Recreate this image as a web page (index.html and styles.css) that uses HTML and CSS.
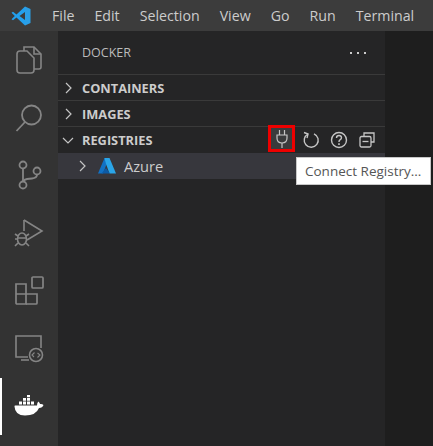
FILE: index.html
```html
<!DOCTYPE html>
<html lang="en">
<head>
    <meta charset="UTF-8">
    <meta name="viewport" content="width=device-width, initial-scale=1.0">
    <title>Docker registries</title>
    <link rel="stylesheet" href="styles.css">
</head>
<body>
    <header class="titlebar">
        <svg class="logo" width="20" height="20" viewBox="0 0 20 20">
            <path d="M14 0.5 L19.5 3 V17 L14 19.5 L14 14 V6 Z" fill="#2b9fe6"/>
            <path d="M14 0.5 L5.5 8.5 L2 5.8 L0.5 6.8 L3.8 10 L0.5 13.2 L2 14.2 L5.5 11.5 L14 19.5 V14 L8.5 10 L14 6 Z" fill="#23a0ee"/>
        </svg>
        <nav class="menu">
            <span>File</span>
            <span>Edit</span>
            <span>Selection</span>
            <span>View</span>
            <span>Go</span>
            <span>Run</span>
            <span>Terminal</span>
        </nav>
    </header>

    <div class="workbench">
        <aside class="activity">
            <div class="act">
                <svg width="28" height="30" viewBox="0 0 28 30" fill="none" stroke="currentColor" stroke-width="1.6">
                    <path d="M9 6 V2 H19 L26 9 V22 Q26 24 24 24 H19"/>
                    <path d="M19 2 V9 H26"/>
                    <path d="M9 6 H5 Q2 6 2 9 V25 Q2 28 5 28 H16 Q19 28 19 25 V13 L12 6 Z"/>
                </svg>
            </div>
            <div class="act">
                <svg width="28" height="30" viewBox="0 0 28 30" fill="none" stroke="currentColor" stroke-width="1.8">
                    <circle cx="16.5" cy="12" r="9.5"/>
                    <path d="M10 19 L1.5 28"/>
                </svg>
            </div>
            <div class="act">
                <svg width="28" height="30" viewBox="0 0 28 30" fill="none" stroke="currentColor" stroke-width="1.8">
                    <circle cx="8" cy="5" r="3.5"/>
                    <circle cx="8" cy="25" r="3.5"/>
                    <circle cx="22" cy="11" r="3.5"/>
                    <path d="M8 8.5 V21.5"/>
                    <path d="M22 14.5 Q22 18 17 18.5 L12 19 Q9 19.5 8 21.5"/>
                </svg>
            </div>
            <div class="act">
                <svg width="30" height="30" viewBox="0 0 30 30" fill="none" stroke="currentColor" stroke-width="1.6">
                    <path d="M10 2 L28 13 L13 22"/>
                    <path d="M10 2 V13"/>
                    <ellipse cx="8" cy="21" rx="4.5" ry="6"/>
                    <path d="M4 20 H12 M1 16 L4 18 M15 16 L12 18 M1 21 H3.5 M1 28 L4 25 M15 28 L12 25"/>
                </svg>
            </div>
            <div class="act">
                <svg width="30" height="30" viewBox="0 0 30 30" fill="none" stroke="currentColor" stroke-width="1.7">
                    <rect x="18" y="1" width="11" height="11" rx="1"/>
                    <path d="M2 8 H12 V28 H3 Q2 28 2 27 Z"/>
                    <path d="M2 18 H23 V27 Q23 28 22 28 H12"/>
                </svg>
            </div>
            <div class="act">
                <svg width="30" height="30" viewBox="0 0 30 30" fill="none" stroke="currentColor" stroke-width="1.6">
                    <path d="M14 23 H2 V2 H27 V14"/>
                    <path d="M7 26 H15"/>
                    <circle cx="22" cy="21" r="6.5"/>
                    <path d="M20.5 18.5 L18 21 L20 23 M23.5 19 L26 21 L23.5 23.5" stroke-width="1.1"/>
                </svg>
            </div>
            <div class="act act-current">
                <svg width="30" height="22" viewBox="0 0 30 22">
                    <path d="M1 10.5 H23 Q23 7.5 24.5 6.5 Q26 8 26 9 Q28 8.5 29.5 10 Q28.5 13 25 13 Q22 20.5 11 20.5 Q1 20.5 0.5 11.5 Q0.5 10.5 1 10.5 Z" fill="#fff"/>
                    <path d="M5 6.5 H8 V9.5 H5 Z M9 6.5 H12 V9.5 H9 Z M13 6.5 H16 V9.5 H13 Z M17 6.5 H20 V9.5 H17 Z M9 3 H12 V5.7 H9 Z M13 3 H16 V5.7 H13 Z M13 0 H16 V2.3 H13 Z" fill="#fff"/>
                </svg>
            </div>
        </aside>

        <section class="sidebar">
            <div class="side-title">
                <span>DOCKER</span>
                <span class="dots"><i></i><i></i><i></i></span>
            </div>

            <div class="pane-head">
                <svg class="chev" width="16" height="16" viewBox="0 0 16 16"><path d="M6 3 L11 8 L6 13"/></svg>
                <span>CONTAINERS</span>
            </div>
            <div class="pane-head">
                <svg class="chev" width="16" height="16" viewBox="0 0 16 16"><path d="M6 3 L11 8 L6 13"/></svg>
                <span>IMAGES</span>
            </div>
            <div class="pane-head pane-open">
                <svg class="chev" width="16" height="16" viewBox="0 0 16 16"><path d="M3 6 L8 11 L13 6"/></svg>
                <span>REGISTRIES</span>
                <div class="pane-actions">
                    <div class="action action-marked">
                        <svg width="16" height="20" viewBox="0 0 16 20" fill="none" stroke="currentColor" stroke-width="1.2">
                            <path d="M5.5 1 V6 M10.5 1 V6"/>
                            <path d="M3 6 H13 V9 Q13 14 8 14 Q3 14 3 9 Z"/>
                            <path d="M8 14 V19"/>
                        </svg>
                    </div>
                    <div class="action">
                        <svg width="18" height="18" viewBox="0 0 18 18" fill="none" stroke="currentColor" stroke-width="1.4">
                            <path d="M6 3 A7 7 0 1 0 12 2.8"/>
                            <path d="M2 1.5 L6 3 L5 7"/>
                        </svg>
                    </div>
                    <div class="action">
                        <svg width="18" height="18" viewBox="0 0 18 18" fill="none" stroke="currentColor" stroke-width="1.4">
                            <circle cx="9" cy="9" r="7.5"/>
                            <path d="M6.5 7 Q6.5 4.5 9 4.5 Q11.5 4.5 11.5 6.8 Q11.5 8 10 8.8 Q9 9.4 9 11"/>
                            <path d="M9 12.3 V14" stroke-width="1.6"/>
                        </svg>
                    </div>
                    <div class="action">
                        <svg width="16" height="16" viewBox="0 0 16 16" fill="none" stroke="currentColor" stroke-width="1.3">
                            <path d="M5 4 V1 H15 V10 H12"/>
                            <rect x="1" y="4.5" width="11" height="10.5" rx="1.5"/>
                            <path d="M3.5 9.5 H9.5"/>
                        </svg>
                    </div>
                </div>
            </div>

            <div class="tree-row">
                <svg class="chev" width="16" height="16" viewBox="0 0 16 16"><path d="M6 3 L11 8 L6 13"/></svg>
                <svg class="azure" width="18" height="16" viewBox="0 0 18 16">
                    <path d="M6.5 0 H11 L5 15.5 H0 Z" fill="#1171c4"/>
                    <path d="M6.5 0 H11.5 L18 15.5 H11.5 L8 6 Z" fill="#2aa5e8"/>
                    <path d="M8 10 L12 15.5 H3.5 Z" fill="#0c5aa6"/>
                </svg>
                <span>Azure</span>
            </div>

            <div class="tooltip">Connect Registry...</div>
        </section>

        <main class="editor"></main>
    </div>
</body>
</html>
```

FILE: styles.css
```css
* {
    box-sizing: border-box;
}

body {
    margin: 0;
    height: 446px;
    overflow: hidden;
    display: flex;
    flex-direction: column;
    font-family: "Open Sans", "Noto Sans", sans-serif;
    background-color: #1e1e1e;
}

.titlebar {
    height: 31px;
    display: flex;
    align-items: center;
    background-color: #3c3c3c;
    color: #cccccc;
}
.logo {
    margin-left: 11px;
    margin-right: 21px;
}
.menu {
    display: flex;
    gap: 20px;
    font-size: 14.2px;
}

.workbench {
    flex: 1;
    display: flex;
    min-height: 0;
}

.activity {
    width: 58px;
    background-color: #333333;
    color: #858585;
    display: flex;
    flex-direction: column;
}
.act {
    height: 57.75px;
    display: flex;
    align-items: center;
    justify-content: center;
}
.act-current {
    color: #ffffff;
    border-left: 2px solid #ffffff;
    padding-right: 2px;
}

.sidebar {
    position: relative;
    width: 327px;
    background-color: #252526;
    color: #cccccc;
}
.side-title {
    height: 43px;
    display: flex;
    align-items: center;
    justify-content: space-between;
    padding: 0 19px 0 24px;
    font-size: 12.5px;
    color: #bbbbbb;
}
.dots {
    display: flex;
    gap: 5px;
}
.dots i {
    width: 2px;
    height: 2px;
    background-color: #cccccc;
}

.pane-head {
    height: 26px;
    display: flex;
    align-items: center;
    border-top: 1px solid #3a3a3a;
    font-size: 12.8px;
    font-weight: 700;
    padding-left: 2px;
}
.pane-head:first-of-type {
    border-top: 0;
}
.pane-open {
    height: 27px;
}
.chev {
    fill: none;
    stroke: #c5c5c5;
    stroke-width: 1.2;
    margin-right: 6px;
}
.pane-actions {
    margin-left: auto;
    display: flex;
    align-items: center;
    gap: 3px;
    padding-right: 6px;
    color: #c5c5c5;
}
.action {
    width: 25px;
    height: 26px;
    display: flex;
    align-items: center;
    justify-content: center;
}
.action-marked {
    width: 27px;
    height: 27px;
    margin-top: -3px;
    border: 3px solid #ee0000;
    background-color: #3a3b3c;
}

.tree-row {
    height: 26px;
    display: flex;
    align-items: center;
    background-color: #37373d;
    padding-left: 16px;
    font-size: 14.6px;
}
.tree-row .chev {
    margin-right: 8px;
}
.azure {
    margin-right: 8px;
}

.tooltip {
    position: absolute;
    left: 238px;
    top: 126px;
    width: 135px;
    height: 28px;
    display: flex;
    align-items: center;
    padding-left: 8px;
    font-size: 13.5px;
    white-space: nowrap;
    background-color: #ffffff;
    color: #555555;
    border: 1px solid #c8c8c8;
}

.editor {
    flex: 1;
    background-color: #1e1e1e;
}
```
